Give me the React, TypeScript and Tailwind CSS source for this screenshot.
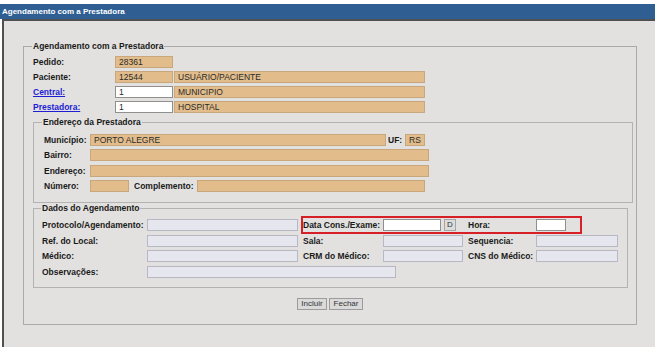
import React from "react";

const tan = "bg-[#e2bd8b] border border-[#c9a77c]";
const lav = "bg-[#e6e6ef] border border-[#b8b8c4]";
const white = "bg-white border border-[#8f8f8f]";

function Box({ w, kind, value = "" }: { w: string; kind: string; value?: string }) {
  return (
    <input
      readOnly
      value={value}
      className={`${w} ${kind} h-[12px] shrink-0 px-[3px] text-[8.5px] leading-[10px] text-[#2a2a2a] outline-none`}
    />
  );
}

function Label({
  w,
  children,
  link,
  className = "",
}: {
  w: string;
  children: React.ReactNode;
  link?: boolean;
  className?: string;
}) {
  return (
    <span
      className={`${w} ${className} block shrink-0 text-[8.5px] leading-[10px] font-bold whitespace-nowrap ${
        link ? "text-[#1d1dd6] underline" : "text-[#1a1a1a]"
      }`}
    >
      {children}
    </span>
  );
}

export default function App() {
  return (
    <div
      className="w-[655px] h-[350px] bg-white pt-[4px] overflow-hidden"
      style={{ fontFamily: '"Liberation Sans", Arial, sans-serif' }}
    >
      <div className="h-[15px] bg-[#2f5e93] pl-[2px] flex items-center text-white text-[8px] font-bold">
        Agendamento com a Prestadora
      </div>

      <div className="ml-[2px] h-[328px] bg-[#e2e1df] border-l-2 border-t-2 border-[#505050] pt-[20px]">
        <fieldset className="ml-[19px] w-[614px] border border-[#a9a9a9] pl-[9px] pt-[3px] pb-[14px]">
          <legend className="text-[8.5px] leading-[10px] font-bold text-[#1a1a1a] -ml-[1px] px-[1px]">
            Agendamento com a Prestadora
          </legend>

          <div className="h-[15px] flex items-center">
            <Label w="w-[82px]">Pedido:</Label>
            <Box w="w-[58px]" kind={tan} value="28361" />
          </div>
          <div className="h-[15px] flex items-center gap-[1px]">
            <Label w="w-[81px]">Paciente:</Label>
            <Box w="w-[58px]" kind={tan} value="12544" />
            <Box w="w-[251px]" kind={tan} value="USUÁRIO/PACIENTE" />
          </div>
          <div className="h-[15px] flex items-center gap-[1px]">
            <Label w="w-[81px]" link>Central:</Label>
            <Box w="w-[58px]" kind={white} value="1" />
            <Box w="w-[251px]" kind={tan} value="MUNICIPIO" />
          </div>
          <div className="h-[15px] flex items-center gap-[1px]">
            <Label w="w-[81px]" link>Prestadora:</Label>
            <Box w="w-[58px]" kind={white} value="1" />
            <Box w="w-[251px]" kind={tan} value="HOSPITAL" />
          </div>

          <fieldset className="mt-[3px] w-[600px] border border-[#b3b3b3] pl-[10px] pt-[5px] pb-[8px]">
            <legend className="text-[8.5px] leading-[10px] font-bold text-[#1a1a1a] -ml-[2px] px-[1px]">
              Endereço da Prestadora
            </legend>
            <div className="h-[15.5px] flex items-center">
              <Label w="w-[46px]">Município:</Label>
              <Box w="w-[296px]" kind={tan} value="PORTO ALEGRE" />
              <Label w="w-[17px]" className="ml-[2px]">UF:</Label>
              <Box w="w-[20px]" kind={tan} value="RS" />
            </div>
            <div className="h-[15.5px] flex items-center">
              <Label w="w-[46px]">Bairro:</Label>
              <Box w="w-[339px]" kind={tan} />
            </div>
            <div className="h-[15.5px] flex items-center">
              <Label w="w-[46px]">Endereço:</Label>
              <Box w="w-[339px]" kind={tan} />
            </div>
            <div className="h-[15.5px] flex items-center">
              <Label w="w-[46px]">Número:</Label>
              <Box w="w-[39px]" kind={tan} />
              <Label w="w-[63px]" className="ml-[5px]">Complemento:</Label>
              <Box w="w-[228px]" kind={tan} />
            </div>
          </fieldset>

          <fieldset className="w-[595px] border border-[#b3b3b3] pl-[8px] pt-[4px] pb-[7px]">
            <legend className="text-[8.5px] leading-[10px] font-bold text-[#1a1a1a] -ml-[1px] px-[1px]">
              Dados do Agendamento
            </legend>
            <div className="h-[15.7px] flex items-center">
              <Label w="w-[105px]">Protocolo/Agendamento:</Label>
              <Box w="w-[151px]" kind={lav} />
              <div className="ml-[3px] w-[281px] h-[18px] shrink-0 border-2 border-[#d61f26] flex items-center">
                <Label w="w-[80px]">Data Cons./Exame:</Label>
                <Box w="w-[58px]" kind={white} />
                <button className="ml-[3px] w-[12px] h-[12px] shrink-0 bg-[#dcdcdc] border border-[#a5a5a5] text-[8px] leading-[10px] text-[#333]">
                  D
                </button>
                <Label w="w-[68px]" className="ml-[12px]">Hora:</Label>
                <Box w="w-[30px]" kind={white} />
              </div>
            </div>
            <div className="h-[15.7px] flex items-center">
              <Label w="w-[105px]">Ref. do Local:</Label>
              <Box w="w-[151px]" kind={lav} />
              <Label w="w-[80px]" className="ml-[5px]">Sala:</Label>
              <Box w="w-[80px]" kind={lav} />
              <Label w="w-[68px]" className="ml-[5px]">Sequencia:</Label>
              <Box w="w-[82px]" kind={lav} />
            </div>
            <div className="h-[15.7px] flex items-center">
              <Label w="w-[105px]">Médico:</Label>
              <Box w="w-[151px]" kind={lav} />
              <Label w="w-[80px]" className="ml-[5px]">CRM do Médico:</Label>
              <Box w="w-[80px]" kind={lav} />
              <Label w="w-[68px]" className="ml-[5px]">CNS do Médico:</Label>
              <Box w="w-[82px]" kind={lav} />
            </div>
            <div className="h-[15.7px] flex items-center">
              <Label w="w-[105px]">Observações:</Label>
              <Box w="w-[249px]" kind={lav} />
            </div>
          </fieldset>

          <div className="mt-[10px] -ml-[9px] flex justify-center gap-[2px]">
            <button className="w-[30px] h-[12px] bg-[#dadada] border border-[#9c9c9c] text-[8px] leading-[10px] text-[#333]">
              Incluir
            </button>
            <button className="w-[34px] h-[12px] bg-[#dadada] border border-[#9c9c9c] text-[8px] leading-[10px] text-[#333]">
              Fechar
            </button>
          </div>
        </fieldset>
      </div>
    </div>
  );
}
